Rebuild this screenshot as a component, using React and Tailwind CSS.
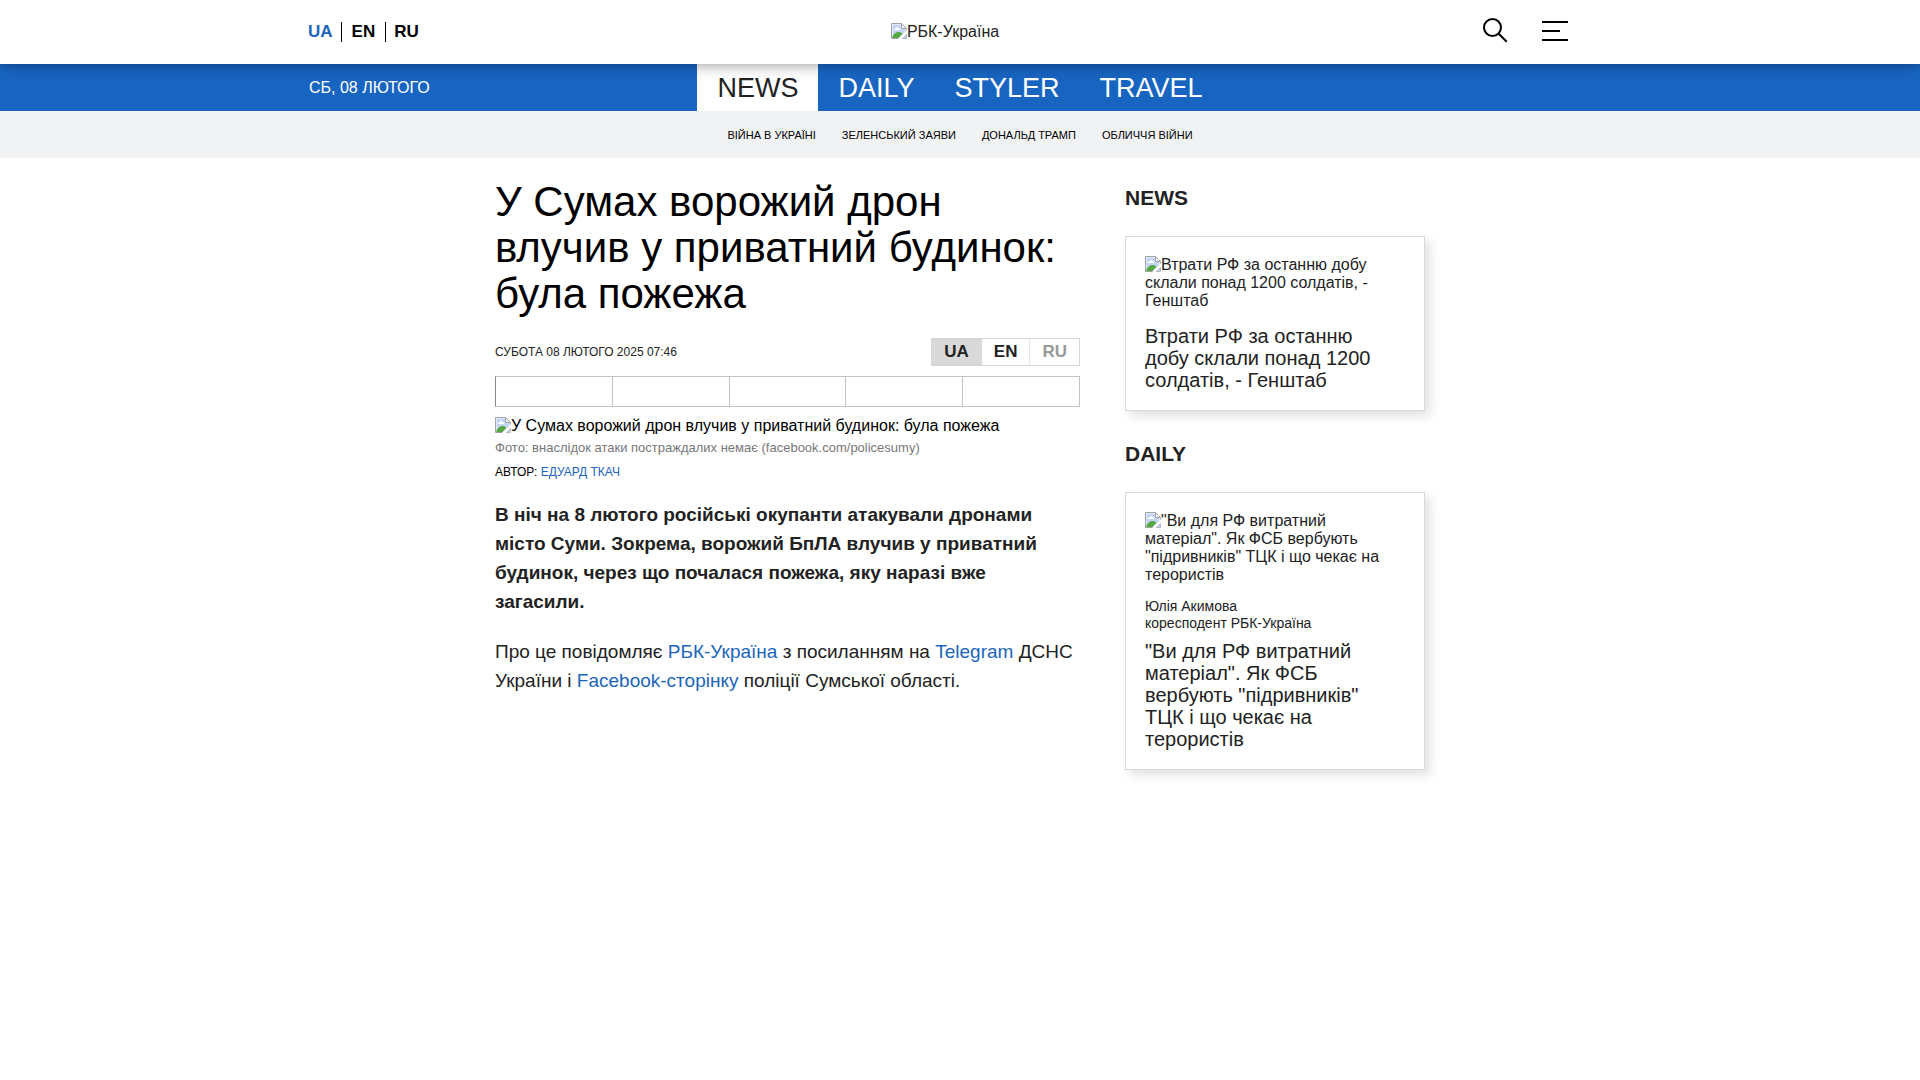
const sections = [
  { name: 'NEWS', active: true },
  { name: 'DAILY' },
  { name: 'STYLER' },
  { name: 'TRAVEL' },
]

const topics = ['Війна в Україні', 'Зеленський заяви', 'Дональд Трамп', 'Обличчя війни']

const shares = ['Facebook', 'X', 'Telegram', 'Viber', 'WhatsApp']

function MissingImage({ alt }) {
  return (
    <>
      <svg width="16" height="16" viewBox="0 0 16 16" aria-hidden="true" className="inline-block align-top">
        <path d="M.5 .5h10l5 5V8L8 15.500H.5z" fill="#fff" stroke="#9fa3a8" />
        <path d="M1.500 1.500H10V6h4.500v2L7.500 15h-6z" fill="#c3d4f5" />
        <path d="M3 7c0-1.200.8-1.800 1.600-1.800C5.200 3.800 7.200 3.800 7.700 5.200 8.700 5.200 9.300 6 9.300 7z" fill="#fff" />
        <path d="M1.500 15v-1.500C3 10.500 5 9 7.500 9c1.700 0 3 .6 4 1.500L7.500 15z" fill="#55a841" />
        <path d="M10.500 .5v5h5z" fill="#f2f3f5" stroke="#9fa3a8" />
        <path d="M7 16l9-9v3l-6 6z" fill="#fff" />
        <path d="M11.500 15.500l4-4v4z" fill="#c3d4f5" stroke="#9fa3a8" strokeWidth=".7" />
      </svg>
      {alt}
    </>
  )
}

function Header() {
  return (
    <header className="relative z-10 bg-white shadow-[0_0_14px_rgba(0,0,0,0.45)]">
      <div className="mx-auto grid h-16 max-w-[1304px] grid-cols-[1fr_auto_1fr] items-center">
        <div className="flex items-center text-[17px] leading-5 font-bold text-black">
          <a href="#ua" className="pr-2 text-[#1c65bb]">UA</a>
          <a href="#en" className="border-l border-black px-[10px]">EN</a>
          <a href="#ru" className="border-l border-black pl-2">RU</a>
        </div>
        <a href="#home" className="mr-[30px] text-base leading-[18px]">
          <MissingImage alt="РБК-Україна" />
        </a>
        <div className="flex items-center justify-end gap-[33px] pr-11 pb-0.5">
          <button type="button" aria-label="Пошук">
            <svg width="26" height="26" viewBox="0 0 26 26" fill="none" stroke="#000" strokeWidth="2">
              <circle cx="9.500" cy="9.500" r="8.500" />
              <path d="M15.700 15.700l8 8" />
            </svg>
          </button>
          <button type="button" aria-label="Меню">
            <svg width="26" height="20" viewBox="0 0 26 20" fill="#000">
              <path d="M0 0h26v2H0zM0 9h18v2H0zM0 18h26v2H0z" />
            </svg>
          </button>
        </div>
      </div>
    </header>
  )
}

function Navigation() {
  return (
    <>
      <div className="bg-[#1865c1] text-white">
        <div className="mx-auto grid h-[47px] max-w-[1302px] grid-cols-[1fr_auto_1fr] items-center">
          <span className="text-base">СБ, 08 ЛЮТОГО</span>
          <nav className="flex h-full text-[27px]">
            {sections.map((section) => (
              <a
                key={section.name}
                href="#section"
                className={
                  section.active
                    ? 'flex items-center bg-white px-5 pt-0.5 text-[#222]'
                    : 'flex items-center px-5 pt-0.5'
                }
              >
                {section.name}
              </a>
            ))}
          </nav>
        </div>
      </div>
      <nav className="flex h-[47px] items-center justify-center gap-[26px] bg-[#f1f2f4] pt-0.5 text-[11px] text-black uppercase">
        {topics.map((topic) => (
          <a key={topic} href="#topic">{topic}</a>
        ))}
      </nav>
    </>
  )
}

function Article() {
  return (
    <article className="min-w-0 flex-1 pt-[21px]">
      <h1 className="text-[42px] leading-[46px] text-black">
        У Сумах ворожий дрон влучив у приватний будинок: була пожежа
      </h1>
      <div className="mt-[21px] flex items-center justify-between">
        <time className="text-xs uppercase">Субота 08 лютого 2025 07:46</time>
        <div className="flex border border-[#d5d5d5] text-[17px] leading-[26px] font-bold">
          <a href="#ua" className="border-r border-[#d9d9d9] bg-[#d9d9d9] px-3">UA</a>
          <a href="#en" className="px-3">EN</a>
          <a href="#ru" className="border-l border-[#e5e5e5] px-3 text-[#999]">RU</a>
        </div>
      </div>
      <div className="mt-[10px] grid h-[31px] grid-cols-5 border-y border-l border-[#c4c4c4] border-l-[#888]">
        {shares.map((share) => (
          <button key={share} type="button" aria-label={share} className="border-r border-[#c4c4c4]" />
        ))}
      </div>
      <figure className="mt-[10px]">
        <p className="text-base leading-[18px] text-black">
          <MissingImage alt="У Сумах ворожий дрон влучив у приватний будинок: була пожежа" />
        </p>
        <figcaption className="mt-[5px] text-[13px] leading-[15px] text-[#777]">
          Фото: внаслідок атаки постраждалих немає (facebook.com/policesumy)
        </figcaption>
      </figure>
      <p className="mt-[9px] text-xs text-black uppercase">
        Автор: <a href="#author" className="text-[#1c65bb]">Едуард Ткач</a>
      </p>
      <p className="mt-5 text-[19px] leading-[29px] font-bold">
        В ніч на 8 лютого російські окупанти атакували дронами місто Суми. Зокрема, ворожий БпЛА
        влучив у приватний будинок, через що почалася пожежа, яку наразі вже загасили.
      </p>
      <p className="mt-[21px] text-[19px] leading-[29px]">
        Про це повідомляє <a href="#rbc" className="text-[#1c65bb]">РБК-Україна</a> з посиланням на{' '}
        <a href="#telegram" className="text-[#1c65bb]">Telegram</a> ДСНС України і{' '}
        <a href="#facebook" className="text-[#1c65bb]">Facebook-сторінку</a> поліції Сумської області.
      </p>
    </article>
  )
}

function SideCard({ heading, title, author, role }) {
  return (
    <section>
      <h2 className="text-[21px] leading-6 font-bold">{heading}</h2>
      <a
        href="#story"
        className="mt-[26px] block border border-[#d9d9d9] bg-white p-[19px] shadow-[5px_5px_10px_rgba(0,0,0,0.12)]"
      >
        <p className="text-base leading-[18px]">
          <MissingImage alt={title} />
        </p>
        {author && (
          <p className="mt-[14px] -mb-[7px] text-sm leading-[17px]">
            {author}
            <br />
            {role}
          </p>
        )}
        <h3 className="mt-[15px] pr-4 text-xl leading-[22px]">{title}</h3>
      </a>
    </section>
  )
}

export default function App() {
  return (
    <div className="min-h-screen bg-white font-['Liberation_Sans',Arial,sans-serif] text-[#222]">
      <Header />
      <Navigation />
      <main className="mx-auto flex max-w-[930px] items-start gap-[45px]">
        <Article />
        <aside className="flex w-[300px] shrink-0 flex-col gap-[31px] pt-7">
          <SideCard heading="NEWS" title="Втрати РФ за останню добу склали понад 1200 солдатів, - Генштаб" />
          <SideCard
            heading="DAILY"
            author="Юлія Акимова"
            role="коресподент РБК-Україна"
            title={'"Ви для РФ витратний матеріал". Як ФСБ вербують "підривників" ТЦК і що чекає на терористів'}
          />
        </aside>
      </main>
    </div>
  )
}
